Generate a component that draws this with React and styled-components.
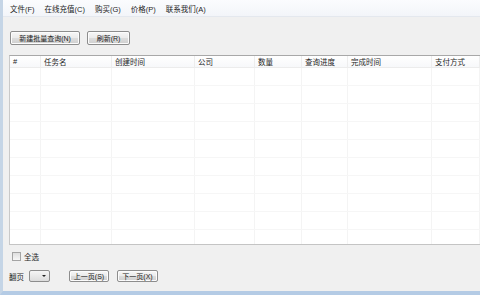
import React from 'react';
import styled, { createGlobalStyle } from 'styled-components';

const Global = createGlobalStyle`
  html, body { margin: 0; padding: 0; }
  body {
    font-family: "Liberation Sans", "Noto Sans CJK SC", sans-serif;
    font-size: 7.5px;
    color: #1e1e1e;
  }
`;

const Frame = styled.div`
  width: 480px;
  height: 295px;
  box-sizing: border-box;
  background: #f0f0f0;
  border-left: 3px solid #c5d5e6;
  border-bottom: 4px solid #b4cbe5;
  display: flex;
  flex-direction: column;
  overflow: hidden;
`;

const MenuBar = styled.div`
  height: 16px;
  display: flex;
  align-items: center;
  gap: 10px;
  padding-left: 7px;
  background: linear-gradient(#fbfcfe, #f3f5f9);
  border-bottom: 1px solid #e4e8ee;
`;

const MenuItem = styled.span`
  white-space: nowrap;
`;

const Toolbar = styled.div`
  display: flex;
  gap: 7px;
  padding: 14px 0 0 7px;
`;

const Button = styled.button`
  height: 14px;
  width: ${p => p.w}px;
  padding: 0;
  font: inherit;
  font-size: 7px;
  color: #222;
  border: 1px solid #8d8d8d;
  border-radius: 2px;
  background: linear-gradient(#f7f7f7 0%, #ebebeb 50%, #dddddd 51%, #cfcfcf 100%);
  box-shadow: inset 0 0 0 1px #fcfcfc;
  display: flex;
  align-items: center;
  justify-content: center;
`;

const Table = styled.div`
  margin: 10px 0 0 6px;
  height: 188px;
  background: #fff;
  border-top: 1px solid #a8a8a8;
  border-left: 1px solid #c9c9c9;
  border-bottom: 1px solid #c4c4c4;
  display: flex;
  flex-direction: column;
  overflow: hidden;
`;

const cols = '31px 71px 83px 60px 47px 46px 84px 1fr';

const HeadRow = styled.div`
  display: grid;
  grid-template-columns: ${cols};
  height: 14px;
  background: linear-gradient(#ffffff, #f7f8fa);
  border-bottom: 1px solid #ececec;
`;

const HeadCell = styled.div`
  display: flex;
  align-items: center;
  padding-left: 3px;
  border-right: 1px solid #ededed;
  white-space: nowrap;
`;

const Row = styled.div`
  display: grid;
  grid-template-columns: ${cols};
  height: 17px;
  flex-shrink: 0;
  border-bottom: 1px solid #f6f6f6;
`;

const Cell = styled.div`
  border-right: 1px solid #f4f4f4;
`;

const CheckRow = styled.label`
  display: flex;
  align-items: center;
  gap: 3px;
  padding: 6px 0 0 9px;
`;

const Box = styled.span`
  width: 7px;
  height: 7px;
  border: 1px solid #a4a4a4;
  background: linear-gradient(#dedede, #f7f7f7);
`;

const Pager = styled.div`
  display: flex;
  align-items: center;
  padding: 8px 0 0 6px;
`;

const Select = styled.div`
  width: 16px;
  height: 10px;
  margin-left: 5px;
  margin-right: 19px;
  border: 1px solid #8d8d8d;
  border-radius: 2px;
  background: linear-gradient(#f5f5f5, #dcdcdc);
  display: flex;
  align-items: center;
  justify-content: flex-end;
  padding-right: 3px;
  box-sizing: content-box;
`;

const Arrow = styled.span`
  width: 0;
  height: 0;
  border-left: 2px solid transparent;
  border-right: 2px solid transparent;
  border-top: 2px solid #222;
`;

const PageButton = styled(Button)`
  height: 12px;
  margin-right: 8px;
`;

const headers = ['#', '任务名', '创建时间', '公司', '数量', '查询进度', '完成时间', '支付方式'];

export default function App() {
  return (
    <Frame>
      <Global />
      <MenuBar>
        <MenuItem>文件(F)</MenuItem>
        <MenuItem>在线充值(C)</MenuItem>
        <MenuItem>购买(G)</MenuItem>
        <MenuItem>价格(P)</MenuItem>
        <MenuItem>联系我们(A)</MenuItem>
      </MenuBar>
      <Toolbar>
        <Button w={70}>新建批量查询(N)</Button>
        <Button w={43}>刷新(R)</Button>
      </Toolbar>
      <Table>
        <HeadRow>
          {headers.map(h => <HeadCell key={h}>{h}</HeadCell>)}
        </HeadRow>
        {Array.from({ length: 11 }).map((_, i) => (
          <Row key={i}>
            {headers.map(h => <Cell key={h} />)}
          </Row>
        ))}
      </Table>
      <CheckRow>
        <Box />
        全选
      </CheckRow>
      <Pager>
        翻页
        <Select><Arrow /></Select>
        <PageButton w={40}>上一页(S)</PageButton>
        <PageButton w={41}>下一页(X)</PageButton>
      </Pager>
    </Frame>
  );
}
